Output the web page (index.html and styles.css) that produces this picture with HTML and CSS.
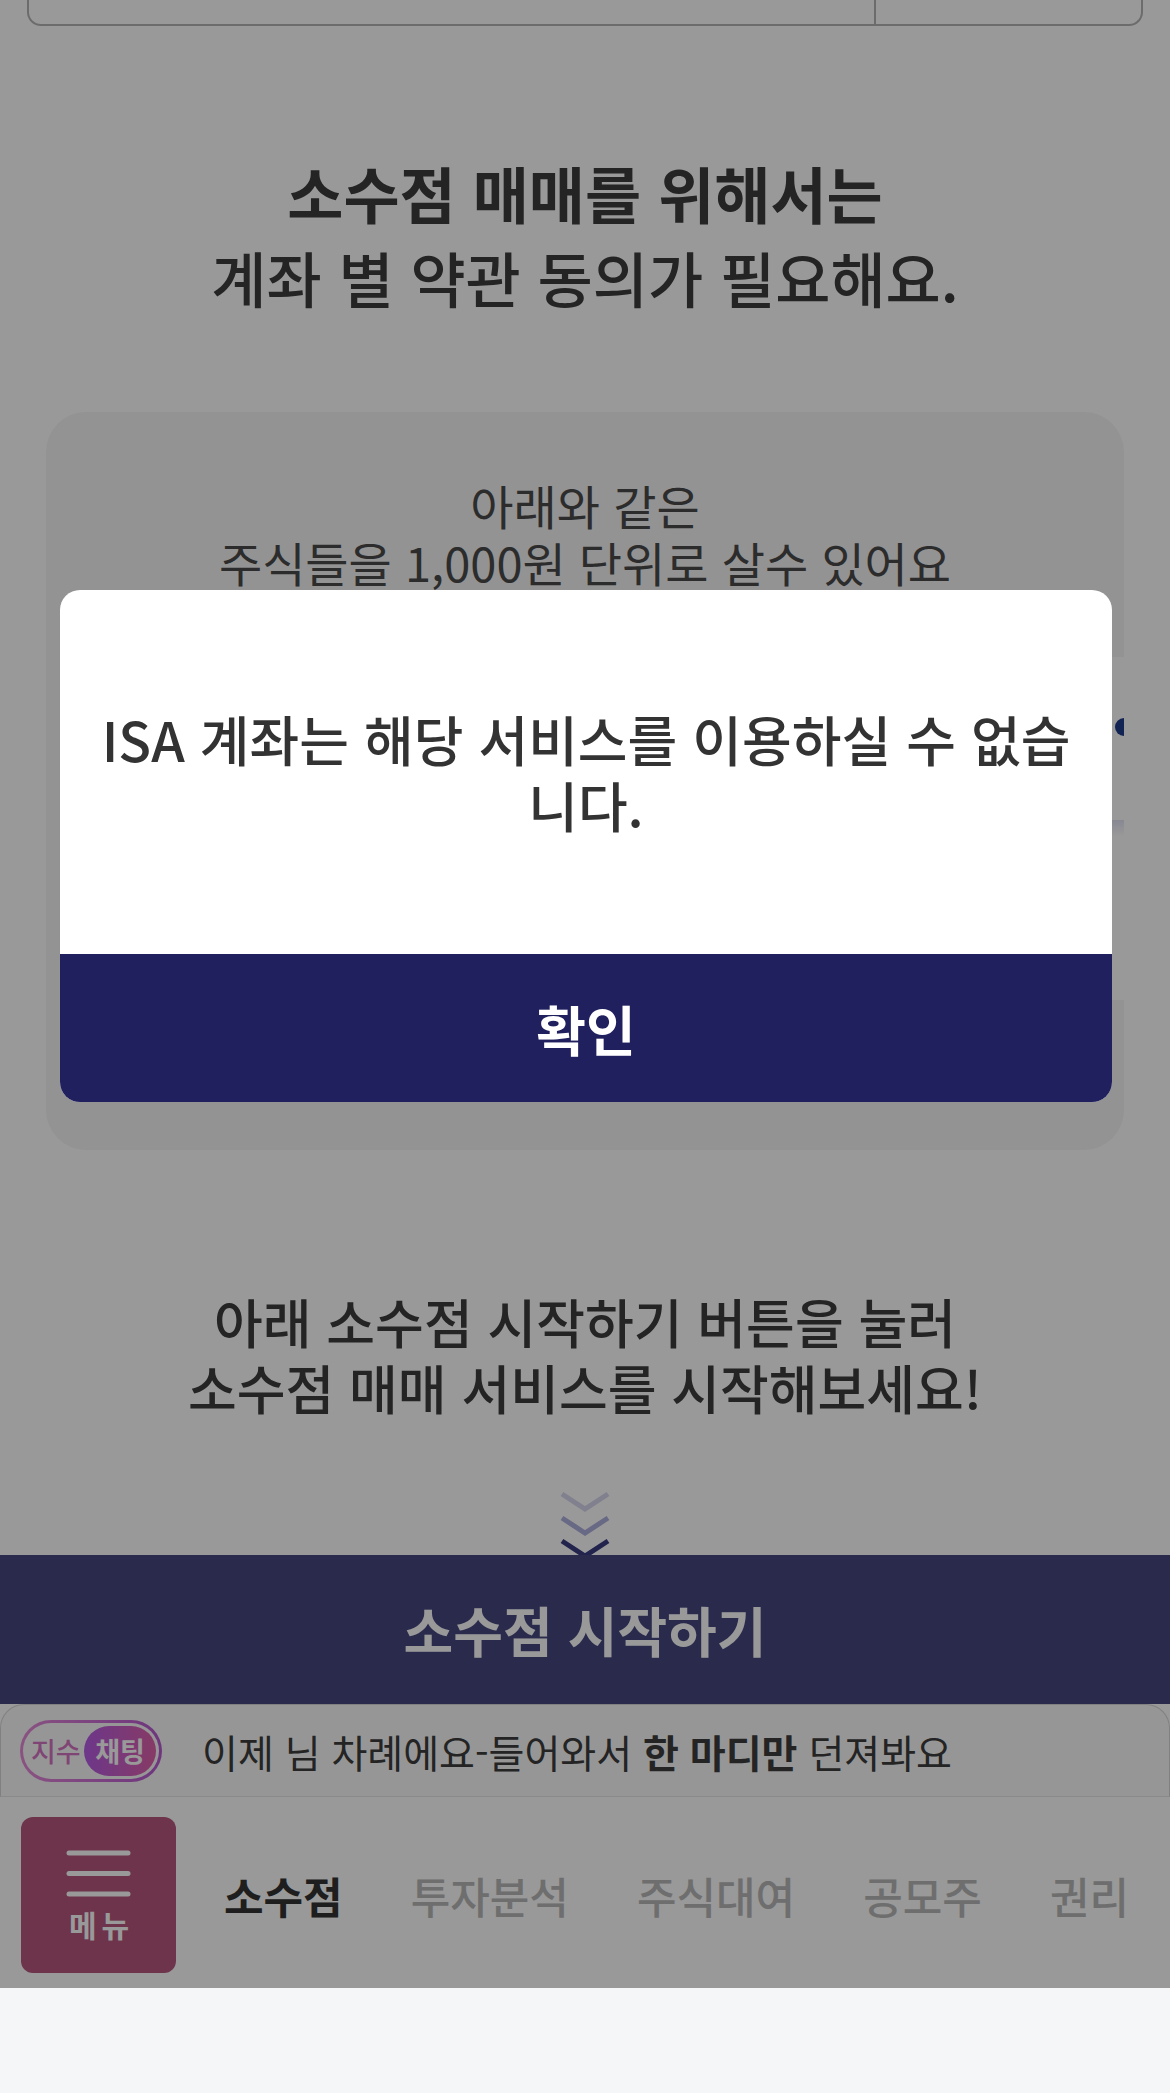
FILE: index.html
```html
<!DOCTYPE html>
<html lang="ko">
<head>
  <meta charset="UTF-8" />
  <meta name="viewport" content="width=device-width, initial-scale=1.0"/>
  <title>소수점 매매</title>
  <link rel="stylesheet" href="styles.css">
</head>
<body>

  <div class="app">
    <div class="account-box">
      <div class="account-main"></div>
      <div class="account-side"></div>
    </div>

    <h1 class="intro-title">
      <span class="strong">소수점 매매를 위해서는</span>
      <span>계좌 별 약관 동의가 필요해요.</span>
    </h1>

    <section class="info-card">
      <p class="info-lead">아래와 같은<br>주식들을 1,000원 단위로 살수 있어요</p>
      <div class="stock-rail">
        <span class="rail-arrow"></span>
      </div>
      <div class="stock-notice">국내 대표 종목부터 해외 인기 종목까지 소수점으로 거래하세요</div>
    </section>

    <p class="guide">아래 소수점 시작하기 버튼을 눌러<br>소수점 매매 서비스를 시작해보세요!</p>

    <svg class="chevrons" viewBox="0 0 52 64" width="52" height="64">
      <polyline points="3,3 26,18 49,3" stroke="#d6d6ee" />
      <polyline points="3,27 26,42 49,27" stroke="#aeafdc" />
      <polyline points="3,50 26,65 49,50" stroke="#3a3c80" />
    </svg>

    <button class="start-btn">소수점 시작하기</button>

    <div class="chat-bar">
      <div class="chat-badge">
        <span class="badge-label">지수</span>
        <span class="badge-fill">채팅</span>
      </div>
      <p class="chat-text">이제 님 차례에요-들어와서 <b>한 마디만</b> 던져봐요</p>
    </div>

    <nav class="tab-bar">
      <div class="menu-btn">
        <svg width="65" height="47" viewBox="0 0 65 47">
          <line x1="3" y1="3" x2="62" y2="3" />
          <line x1="3" y1="23.5" x2="62" y2="23.5" />
          <line x1="3" y1="44" x2="62" y2="44" />
        </svg>
        <span class="menu-label">메뉴</span>
      </div>
      <ul class="tabs">
        <li class="active">소수점</li>
        <li>투자분석</li>
        <li>주식대여</li>
        <li>공모주</li>
        <li>권리</li>
      </ul>
    </nav>

    <!-- dim + alert -->
    <div class="dim"></div>
    <div class="alert">
      <div class="alert-body">ISA 계좌는 해당 서비스를 이용하실 수 없습니다.</div>
      <button class="alert-btn">확인</button>
    </div>
  </div>

  <div class="safe-area"></div>

</body>
</html>
```

FILE: styles.css
```css
body {
  margin: 0;
  width: 1170px;
  background: #fff;
  font-family: "Noto Sans CJK KR", "Noto Sans", sans-serif;
  color: #444;
}

.app {
  position: relative;
  display: flex;
  flex-direction: column;
  background: #fff;
  overflow: hidden;
}

.account-box {
  display: flex;
  height: 26px;
  margin: 0 27px;
  box-sizing: border-box;
  border: 2px solid #b4b4b4;
  border-top: 0;
  border-radius: 0 0 14px 14px;
}

.account-main {
  flex: 1;
}

.account-side {
  width: 265px;
  border-left: 2px solid #b4b4b4;
}

.intro-title {
  margin: 125px 0 0;
  font-size: 60px;
  line-height: 84px;
  font-weight: 500;
  text-align: center;
  color: #3c3c3c;
}

.intro-title span {
  display: block;
}

.intro-title .strong {
  font-size: 61px;
  font-weight: 700;
}

.info-card {
  position: relative;
  height: 738px;
  margin: 93px 46px 0;
  padding-top: 64px;
  box-sizing: border-box;
  background: #f5f5f5;
  border-radius: 40px;
  overflow: hidden;
}

.info-lead {
  margin: 0;
  font-size: 47px;
  line-height: 57px;
  text-align: center;
  color: #4a4a4a;
}

.stock-rail {
  position: relative;
  height: 163px;
  margin: 67px 0 0 30px;
  background: #fff;
  border-radius: 16px 0 0 16px;
}

.rail-arrow {
  position: absolute;
  right: -9px;
  top: 61px;
  width: 18px;
  height: 18px;
  border-radius: 50%;
  background: #1d3c8c;
}

.stock-notice {
  height: 180px;
  margin-left: 30px;
  padding: 38px 0 0 40px;
  box-sizing: border-box;
  background: linear-gradient(#e2e2f4, #fff 16px);
  font-size: 34px;
  line-height: 40px;
  white-space: nowrap;
  color: #444;
}

.guide {
  margin: 138px 0 0;
  font-size: 53px;
  line-height: 66px;
  font-weight: 500;
  text-align: center;
  color: #3c3c3c;
}

.chevrons {
  display: block;
  align-self: center;
  margin-top: 71px;
  fill: none;
  stroke-width: 5;
}

.start-btn {
  height: 149px;
  border: 0;
  background: #45477f;
  color: #fff;
  font-family: inherit;
  font-size: 54px;
  font-weight: 700;
}

.chat-bar {
  display: flex;
  align-items: center;
  gap: 40px;
  height: 93px;
  padding-left: 19px;
  box-sizing: border-box;
  background: #fbfbfb;
  border: 1px solid #d6d6d6;
  border-bottom-color: #e6e6e6;
  border-radius: 24px 24px 0 0;
}

.chat-badge {
  display: flex;
  align-items: center;
  justify-content: space-between;
  flex: none;
  width: 142px;
  height: 62px;
  padding: 0 3px 0 8px;
  box-sizing: border-box;
  border: 3px solid transparent;
  border-radius: 31px;
  background: linear-gradient(#fbfbfb, #fbfbfb) padding-box,
              linear-gradient(90deg, #e58ad8, #b85ad2) border-box;
  white-space: nowrap;
}

.badge-label {
  font-size: 27px;
  font-weight: 500;
  color: #d474c4;
}

.badge-fill {
  display: flex;
  align-items: center;
  justify-content: center;
  flex: none;
  width: 72px;
  height: 50px;
  border-radius: 25px;
  background: linear-gradient(90deg, #b65ce6, #e062aa);
  color: #fff;
  font-size: 27px;
  font-weight: 700;
}

.chat-text {
  margin: 0;
  font-size: 39px;
  color: #3c3c3c;
  white-space: nowrap;
}

.chat-text b {
  font-weight: 700;
}

.tab-bar {
  display: flex;
  align-items: flex-start;
  gap: 48px;
  height: 191px;
  padding: 20px 0 0 21px;
  box-sizing: border-box;
  background: #fff;
  overflow: hidden;
}

.menu-btn {
  display: flex;
  flex-direction: column;
  align-items: center;
  flex: none;
  width: 155px;
  height: 156px;
  padding-top: 33px;
  box-sizing: border-box;
  border-radius: 12px;
  background: #b6577d;
}

.menu-btn svg {
  stroke: #fff;
  stroke-width: 5;
  stroke-linecap: round;
}

.menu-label {
  margin-top: 12px;
  padding-left: 6px;
  font-size: 30px;
  line-height: 30px;
  font-weight: 700;
  letter-spacing: 5px;
  color: #fff;
}

.tabs {
  display: flex;
  align-items: center;
  gap: 68px;
  height: 156px;
  margin: 0;
  padding: 0;
  list-style: none;
  font-size: 43px;
  font-weight: 500;
  color: #b8b8b8;
  white-space: nowrap;
}

.tabs .active {
  font-weight: 700;
  color: #333;
}

.dim {
  position: absolute;
  inset: 0;
  background: rgba(0, 0, 0, 0.4);
}

.alert {
  position: absolute;
  top: 590px;
  left: 60px;
  width: 1052px;
  border-radius: 20px;
  overflow: hidden;
  background: #fff;
}

.alert-body {
  display: flex;
  align-items: center;
  justify-content: center;
  height: 364px;
  padding: 0 30px;
  font-size: 54px;
  line-height: 66px;
  font-weight: 500;
  text-align: center;
  color: #333;
}

.alert-btn {
  display: block;
  width: 100%;
  height: 148px;
  border: 0;
  background: #20205f;
  color: #fff;
  font-family: inherit;
  font-size: 54px;
  font-weight: 700;
}

.safe-area {
  height: 105px;
  background: #f5f6f8;
}
```
